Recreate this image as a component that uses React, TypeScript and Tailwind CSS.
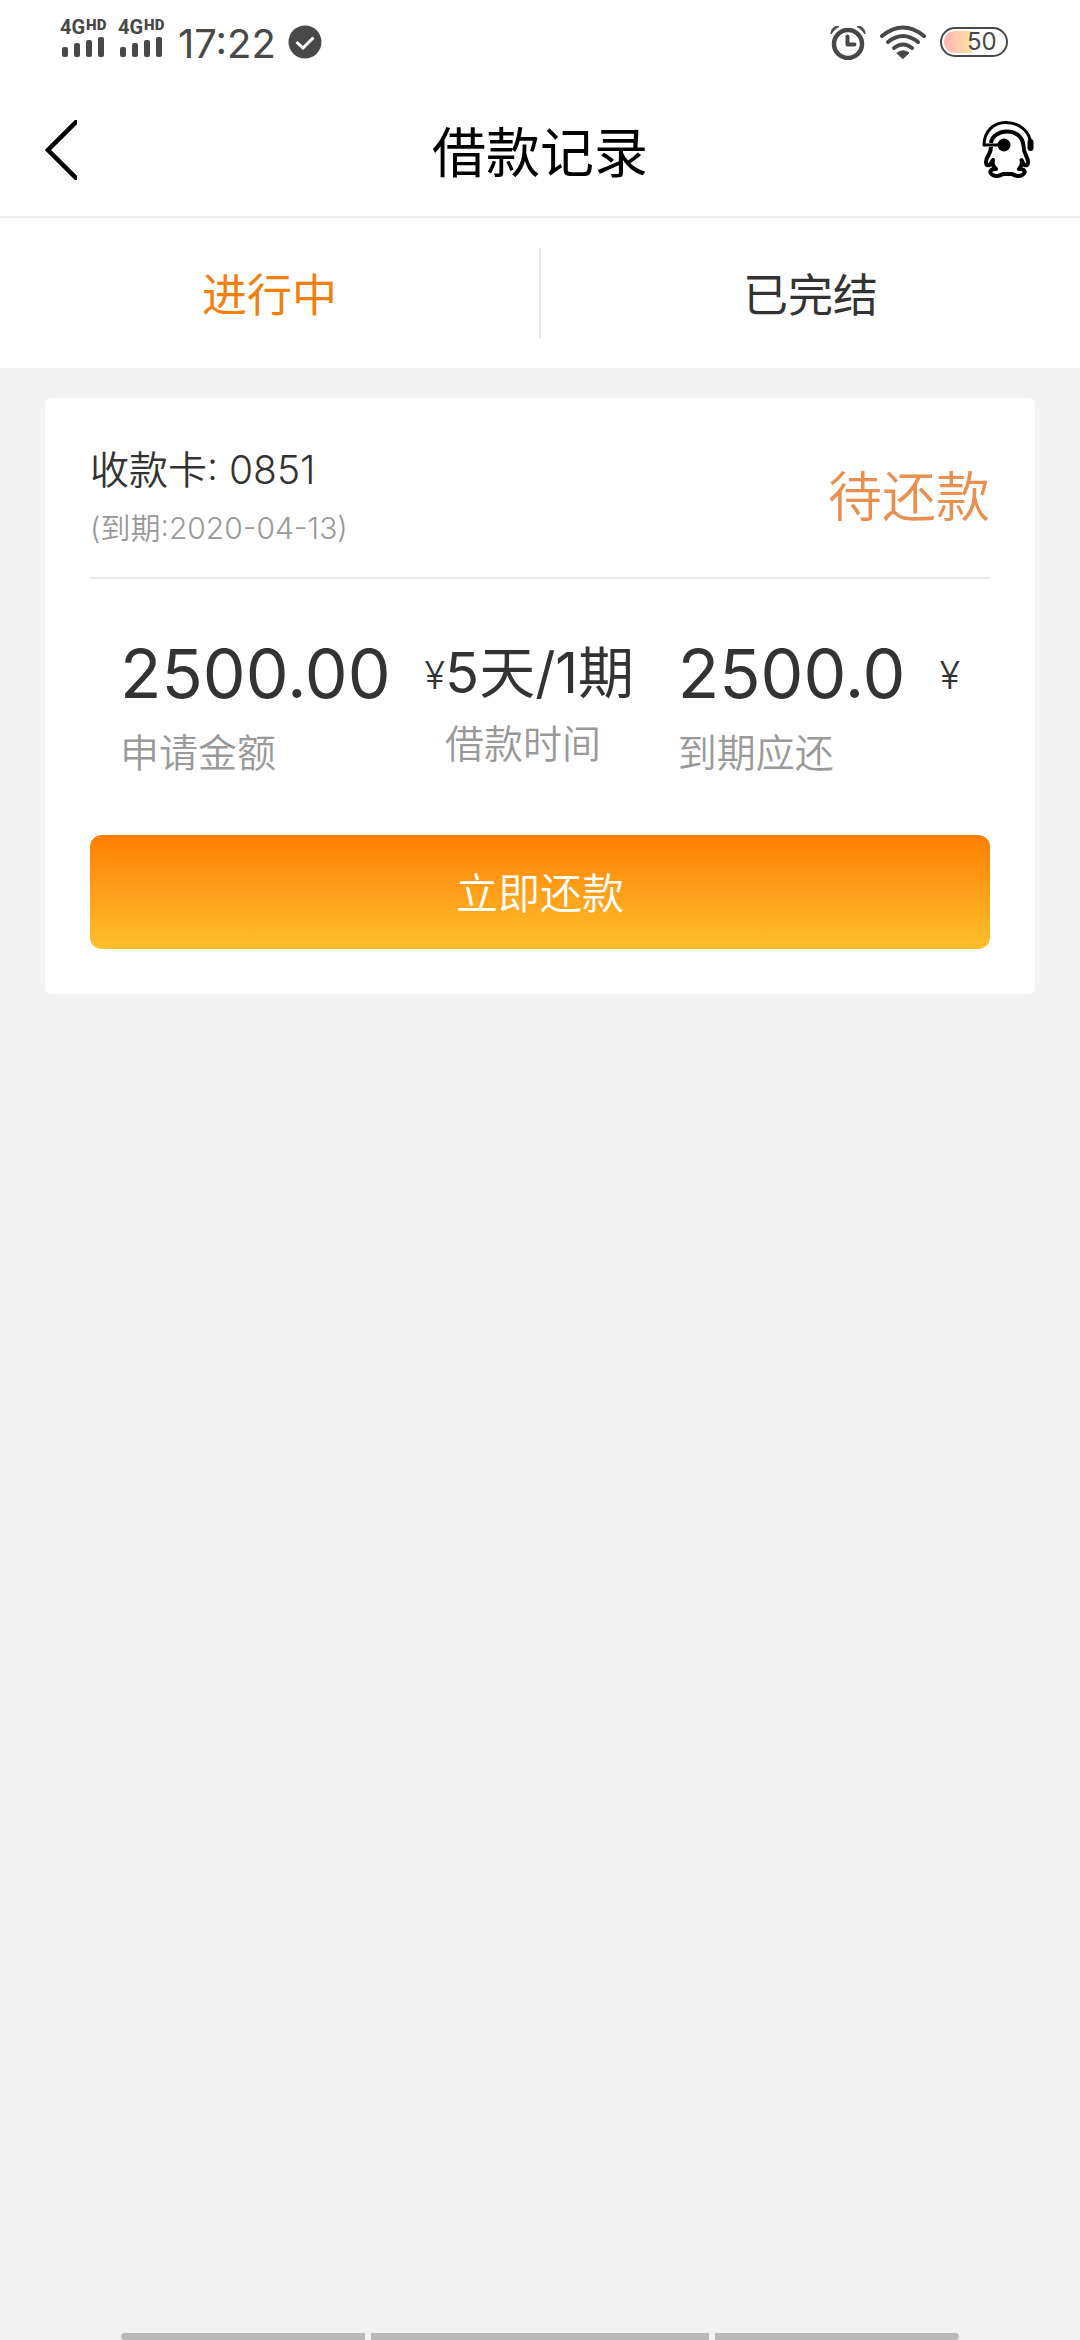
import { useState } from 'react';

const TABS = [
  { id: 'ongoing', label: '进行中' },
  { id: 'finished', label: '已完结' },
];

const LOAN = {
  card: '0851',
  dueDate: '2020-04-13',
  status: '待还款',
  amount: '2500.00',
  term: '5天/1期',
  due: '2500.0',
};

function Signal() {
  return (
    <div className="w-[46px]">
      <div className="flex h-[17px] items-start gap-px font-['Roboto'] leading-none">
        <span className="text-[20px] leading-[17px] font-bold">4G</span>
        <span className="text-[15px] leading-[12px] font-black">HD</span>
      </div>
      <svg className="mt-px ml-[2px] block" width="42" height="20" viewBox="0 0 42 20" fill="currentColor">
        <rect x="0" y="10" width="6" height="10" rx="2" />
        <rect x="12" y="6" width="6" height="14" rx="2" />
        <rect x="24" y="3" width="6" height="17" rx="2" />
        <rect x="36" y="0" width="6" height="20" rx="2" />
      </svg>
    </div>
  );
}

function StatusBar() {
  return (
    <div className="flex h-[84px] items-center justify-between pr-[72px] pl-[60px] text-[#484848]">
      <div className="flex items-center">
        <div className="flex gap-3 pb-2">
          <Signal />
          <Signal />
        </div>
        <span className="ml-[14px] mt-1 text-[40px] leading-none">17:22</span>
        <svg className="ml-3" width="34" height="34" viewBox="0 0 34 34">
          <circle cx="17" cy="17" r="16.5" fill="currentColor" />
          <path d="M8.5 17l6.5 6L25.5 12.5" fill="none" stroke="#fff" strokeWidth="3" />
        </svg>
      </div>
      <div className="flex items-center">
        <svg width="36" height="36" viewBox="0 0 36 36" fill="none" stroke="currentColor">
          <circle cx="18" cy="20" r="14" strokeWidth="4.5" />
          <path d="M17.5 12.5v8h7" strokeWidth="4" strokeLinejoin="round" strokeLinecap="round" />
          <path d="M1 10C1 5 4 2 9 2.5C5.5 4.5 3.5 6.5 1 10zM35 10C35 5 32 2 27 2.5C30.5 4.5 32.5 6.5 35 10z" fill="currentColor" strokeWidth="1" />
        </svg>
        <svg className="ml-[13px]" width="48" height="36" viewBox="0 0 48 36" fill="none" stroke="currentColor" strokeWidth="4" strokeLinecap="round">
          <path d="M3 12Q24 -5 45 12" />
          <path d="M9 18Q24 6 39 18" />
          <path d="M15 24Q24 17 33 24" />
          <path d="M18 29Q24 24.5 30 29L24 34.5z" fill="currentColor" strokeWidth="1" />
        </svg>
        <div className="ml-[13px] flex h-[30px] w-[68px] items-center rounded-full border-2 border-[#484848] bg-white p-[2px]">
          <div className="flex h-full w-[28px] items-center rounded-l-full bg-linear-to-r from-[#ffb3b3] to-[#ffe3a6] pl-[23px]">
            <span className="text-[24px] leading-none">50</span>
          </div>
        </div>
      </div>
    </div>
  );
}

function ServiceIcon() {
  return (
    <svg width="53" height="60" viewBox="0 0 53 60" fill="none" stroke="currentColor" strokeLinejoin="round">
      <path d="M22 25H2C2 12 11 2.5 24 2.5C37 2.5 47 11 48.5 22" strokeWidth="3" />
      <path d="M48.5 22v6" strokeWidth="6" strokeLinecap="round" />
      <circle cx="22" cy="25" r="6.5" fill="currentColor" stroke="none" />
      <path
        d="M9 23C10 16 17 11.5 25 11.5C34 11.5 41 17 41.5 26C41.5 35 46 36 46 42C46 46 43 46.5 41 43L39.5 40C40.5 44 39 47 37 49C43 49 44 52 41 54.5C38 57 33 56 30 54H21C18 56 13 57 10 54.5C7 52 8 49 14 49C11 47 10 44 11 40L9 43C7 46.5 4 46 4 42C4 36 9 35 9 27"
        strokeWidth="4"
      />
    </svg>
  );
}

export default function App() {
  const [tab, setTab] = useState('ongoing');

  return (
    <div className="flex min-h-screen flex-col bg-[#f3f3f3] font-['Inter','Noto_Sans_CJK_SC',sans-serif] text-[#333]">
      <div className="bg-white">
        <StatusBar />
        <header className="flex h-[134px] items-center justify-between border-b-2 border-[#ebebeb] px-[45px] text-black">
          <button type="button" aria-label="返回" className="w-[53px]">
            <svg width="32" height="60" viewBox="0 0 32 60" fill="none" stroke="currentColor" strokeWidth="4.5">
              <path d="M33 0L3 30L33 60" />
            </svg>
          </button>
          <h1 className="pt-2 text-[54px] leading-none">借款记录</h1>
          <button type="button" aria-label="客服">
            <ServiceIcon />
          </button>
        </header>
        <div role="tablist" className="flex h-[150px] items-center divide-x-2 divide-[#ebebeb]">
          {TABS.map(t => (
            <button
              key={t.id}
              type="button"
              role="tab"
              aria-selected={tab === t.id}
              onClick={() => setTab(t.id)}
              className={`h-[90px] flex-1 pt-1 text-[45px] leading-none ${tab === t.id ? 'text-[#f08010]' : 'text-[#333]'}`}
            >
              {t.label}
            </button>
          ))}
        </div>
      </div>

      <main className="flex-1 px-[45px] pt-[30px]">
        <section className="rounded-md bg-white px-[45px] pb-[45px]">
          <div className="flex h-[181px] items-center justify-between border-b-2 border-[#ebebeb] pt-5">
            <div className="font-[350]">
              <p className="text-[39px] leading-[60px]">收款卡: {LOAN.card}</p>
              <p className="text-[30px] leading-[56px] text-[#999]">(到期:{LOAN.dueDate})</p>
            </div>
            <span className="text-[54px] leading-none font-[350] text-[#e98f50]">{LOAN.status}</span>
          </div>

          <div className="flex items-start px-[30px] pt-[54px]">
            <div>
              <p className="flex h-[80px] items-center gap-[34px] leading-none">
                <span className="text-[68px]">{LOAN.amount}</span>
                <span className="mt-1 text-[38px] font-light">¥</span>
              </p>
              <p className="text-[39px] leading-[80px] font-[350] text-[#999]">申请金额</p>
            </div>
            <div>
              <p className="text-[56px] leading-[80px]">{LOAN.term}</p>
              <p className="text-[39px] leading-[62px] font-[350] text-[#999]">借款时间</p>
            </div>
            <div className="ml-auto">
              <p className="flex h-[80px] items-center gap-[34px] leading-none">
                <span className="text-[68px]">{LOAN.due}</span>
                <span className="mt-1 text-[38px] font-light">¥</span>
              </p>
              <p className="text-[39px] leading-[80px] font-[350] text-[#999]">到期应还</p>
            </div>
          </div>

          <button
            type="button"
            className="mt-[42px] h-[114px] w-full rounded-xl bg-linear-to-b from-[#ff7e00] to-[#ffbf2b] pt-1 text-[42px] leading-none font-[350] text-white"
          >
            立即还款
          </button>
        </section>
      </main>

      <div className="flex h-[7px] gap-[6px] overflow-hidden px-[121px]">
        <div className="w-[244px] rounded-l-full bg-[#b9b9b9]" />
        <div className="flex-1 bg-[#b9b9b9]" />
        <div className="w-[244px] rounded-r-full bg-[#b9b9b9]" />
      </div>
    </div>
  );
}
